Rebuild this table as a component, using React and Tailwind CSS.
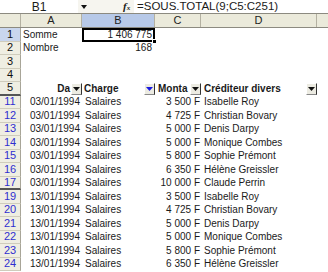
import React from "react";

const data = [
  ["11", "03/01/1994", "Salaires", "3 500 F", "Isabelle Roy"],
  ["12", "03/01/1994", "Salaires", "4 725 F", "Christian Bovary"],
  ["13", "03/01/1994", "Salaires", "5 000 F", "Denis Darpy"],
  ["14", "03/01/1994", "Salaires", "5 000 F", "Monique Combes"],
  ["15", "03/01/1994", "Salaires", "5 800 F", "Sophie Prémont"],
  ["16", "03/01/1994", "Salaires", "6 350 F", "Hélène Greissler"],
  ["17", "03/01/1994", "Salaires", "10 000 F", "Claude Perrin"],
  ["19", "13/01/1994", "Salaires", "3 500 F", "Isabelle Roy"],
  ["20", "13/01/1994", "Salaires", "4 725 F", "Christian Bovary"],
  ["21", "13/01/1994", "Salaires", "5 000 F", "Denis Darpy"],
  ["22", "13/01/1994", "Salaires", "5 000 F", "Monique Combes"],
  ["23", "13/01/1994", "Salaires", "5 800 F", "Sophie Prémont"],
  ["24", "13/01/1994", "Salaires", "6 350 F", "Hélène Greissler"],
];

const grid = "grid grid-cols-[21px_61px_73px_46px_116px_1fr] h-[13.5px]";

function RowHead({ n, blue, sel, thick }) {
  return (
    <div
      className={`flex items-center justify-center border-r border-[#a8a598] text-[11px] ${
        thick ? "border-b-2 border-b-[#555]" : "border-b border-b-[#cfccbc]"
      } ${sel ? "bg-[#c9d6ee]" : "bg-[#efeee2]"} ${blue ? "text-[#2f2fd0]" : "text-[#111]"}`}
    >
      {n}
    </div>
  );
}

function Btn({ blue }) {
  return (
    <div className="flex h-[12px] w-[11px] shrink-0 items-center justify-center border border-t-white border-l-white border-r-[#333] border-b-[#888] bg-[#ecebe2]">
      <svg width="7" height="4" viewBox="0 0 7 4">
        <path d="M0 0H7L3.5 4Z" fill={blue ? "#1a1ae0" : "#111"} />
      </svg>
    </div>
  );
}

export default function App() {
  return (
    <div className="h-[272px] w-[328px] overflow-hidden bg-white text-[10px] leading-none text-[#1a1a1a] [font-family:'Liberation_Sans',Arial,sans-serif]">
      {/* formula bar */}
      <div className="flex h-[14px] items-stretch border-b border-[#8c8a80] bg-[#f6f5ef]">
        <div className="flex w-[78px] items-center justify-center bg-white text-[12px]">B1</div>
        <div className="flex w-[12px] items-center justify-center">
          <svg width="6" height="4" viewBox="0 0 6 4">
            <path d="M0 0H6L3 4Z" fill="#111" />
          </svg>
        </div>
        <div className="w-[33px]" />
        <div className="flex w-[11px] items-center text-[11px] [font-family:'Liberation_Serif',serif] italic font-bold">
          f<span className="text-[7px] mt-[3px]">x</span>
        </div>
        <div className="flex flex-1 items-center bg-white pl-[3px] text-[11.5px]">=SOUS.TOTAL(9;C5:C251)</div>
      </div>
      {/* column headers */}
      <div className="grid h-[14px] grid-cols-[21px_61px_73px_46px_116px_1fr] border-b border-[#8c8a80] bg-[#ebeadb] text-[11px] text-[#222]">
        <div className="border-r border-[#b4b1a2]" />
        <div className="flex items-center justify-center border-r border-[#b4b1a2]">A</div>
        <div className="flex items-center justify-center border-r border-[#b4b1a2] bg-[#b7c9e8]">B</div>
        <div className="flex items-center justify-center border-r border-[#b4b1a2]">C</div>
        <div className="flex items-center justify-center border-r border-[#b4b1a2]">D</div>
        <div />
      </div>
      {/* row 1 */}
      <div className={grid}>
        <RowHead n="1" sel />
        <div className="flex items-center pl-[2px]">Somme</div>
        <div className="relative flex items-center justify-end border-2 border-black pr-[1px]">
          1 406 775
          <div className="absolute -bottom-[4px] -right-[4px] h-[5px] w-[5px] border border-white bg-black" />
        </div>
        <div />
        <div />
        <div />
      </div>
      {/* row 2 */}
      <div className={grid}>
        <RowHead n="2" />
        <div className="flex items-center pl-[2px]">Nombre</div>
        <div className="flex items-center justify-end pr-[3px]">168</div>
        <div />
        <div />
        <div />
      </div>
      <div className={grid}>
        <RowHead n="3" />
        <div /><div /><div /><div /><div />
      </div>
      <div className={grid}>
        <RowHead n="4" />
        <div /><div /><div /><div /><div />
      </div>
      {/* row 5 headers */}
      <div className={grid}>
        <RowHead n="5" thick />
        <div className="flex items-center justify-end font-bold">
          <span className="mr-[1px]">Da</span>
          <Btn />
        </div>
        <div className="flex items-center justify-between pl-[2px] font-bold">
          <span>Charge</span>
          <Btn blue />
        </div>
        <div className="flex items-center justify-between overflow-hidden pl-[3px] font-bold">
          <span className="whitespace-nowrap">Monta</span>
          <Btn />
        </div>
        <div className="flex items-center justify-between pl-[3px] font-bold">
          <span>Créditeur divers</span>
          <Btn />
        </div>
        <div />
      </div>
      {data.map(([n, d, c, m, name]) => (
        <div key={n} className={grid}>
          <RowHead n={n} blue thick={n === "17"} />
          <div className="flex items-center justify-end pr-[2px]">{d}</div>
          <div className="flex items-center pl-[3px]">{c}</div>
          <div className="flex items-center justify-end whitespace-nowrap pr-[1px]">{m}</div>
          <div className="flex items-center whitespace-nowrap pl-[3px]">{name}</div>
          <div />
        </div>
      ))}
    </div>
  );
}
